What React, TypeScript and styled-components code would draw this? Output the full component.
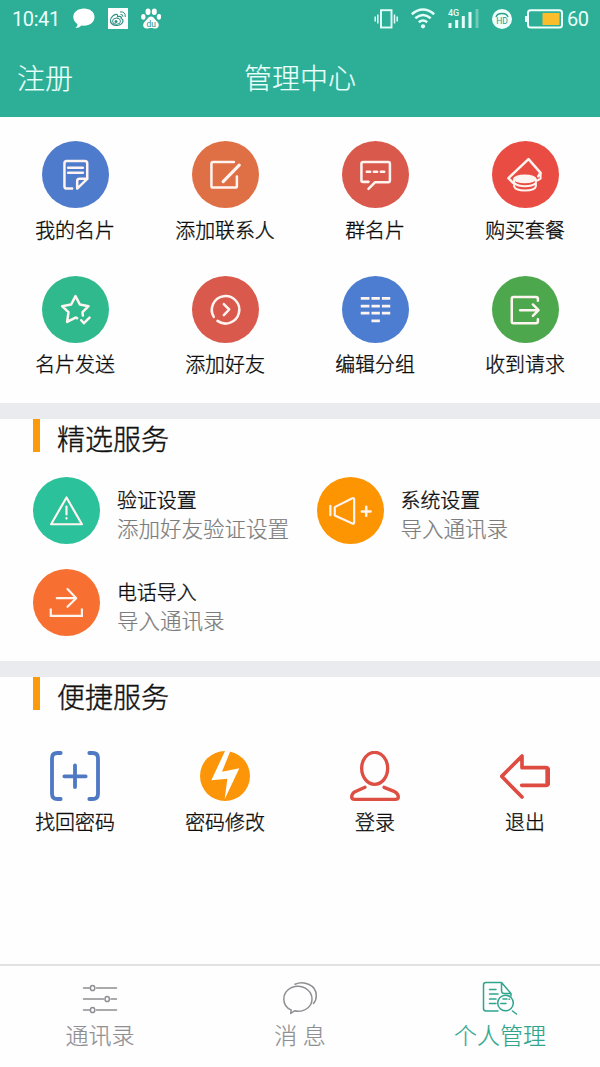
import React from "react";
import styled, { createGlobalStyle } from "styled-components";

const Global = createGlobalStyle`
  *, *::before, *::after { box-sizing: border-box; }
  html, body { margin: 0; padding: 0; background: #fefefe; }
  body {
    font-family: Roboto, "Noto Sans CJK SC", sans-serif;
    color: #111;
    overflow: hidden;
  }
`;

const Screen = styled.div`
  width: 600px;
  height: 1067px;
  display: flex;
  flex-direction: column;
  background: #fefefe;
`;

const Header = styled.header`
  height: 117px;
  flex: none;
  background: #2dae96;
  color: #e9fffb;
`;

const StatusBar = styled.div`
  height: 37px;
  padding: 0 11px 0 12px;
  display: flex;
  align-items: center;
  justify-content: space-between;
`;

const StatusGroup = styled.div`
  display: flex;
  align-items: center;
  gap: 13px;
`;

const StatusText = styled.span<{ $w: number }>`
  width: ${(p) => p.$w}px;
  font-size: 20px;
  line-height: 24px;
  letter-spacing: -0.4px;
  white-space: nowrap;
`;

const BatteryGroup = styled.div`
  display: flex;
  align-items: center;
  gap: 4px;
`;

const NavBar = styled.div`
  height: 80px;
  padding: 6px 17px 0;
  display: grid;
  grid-template-columns: 1fr auto 1fr;
  align-items: center;
  font-size: 28px;
  font-weight: 300;
  line-height: 40px;
  -webkit-text-stroke: 0.2px currentColor;
`;

const ShortcutGrid = styled.section`
  height: 286px;
  flex: none;
  padding-top: 24px;
  display: grid;
  grid-template-columns: repeat(4, 150px);
  grid-auto-rows: 134.5px;
`;

const Shortcut = styled.div<{ $gap: number }>`
  display: flex;
  flex-direction: column;
  align-items: center;
  gap: ${(p) => p.$gap}px;
`;

const Label = styled.span`
  font-size: 19.9px;
  line-height: 28px;
  font-weight: 300;
  -webkit-text-stroke: 0.35px currentColor;
  color: #0c0c0c;
  white-space: nowrap;
`;

const Disc = styled.span<{ $color: string }>`
  width: 67px;
  height: 67px;
  flex: none;
  border-radius: 50%;
  background: ${(p) => p.$color};
  display: flex;

  svg {
    width: 67px;
    height: 67px;
    fill: none;
    stroke: #fff4f0;
    stroke-width: 7.5;
    stroke-linecap: round;
    stroke-linejoin: round;
  }
`;

const Divider = styled.div`
  height: 16px;
  flex: none;
  background: #eaebef;
`;

const Section = styled.section<{ $h: number }>`
  height: ${(p) => p.$h}px;
  flex: none;
`;

const SectionHead = styled.div`
  height: 42px;
  padding-left: 33px;
  display: flex;
  align-items: flex-start;
  gap: 17px;
`;

const Marker = styled.span`
  width: 7px;
  height: 33px;
  background: #fb9b0c;
`;

const SectionTitle = styled.h2`
  margin: 0;
  font-size: 28px;
  line-height: 44px;
  font-weight: 300;
  -webkit-text-stroke: 0.4px currentColor;
`;

const FeatureGrid = styled.div`
  padding: 16px 0 0 33px;
  display: grid;
  grid-template-columns: 283.5px 1fr;
  grid-auto-rows: 92px;
`;

const Feature = styled.div`
  height: 67px;
  display: flex;
  align-items: center;
  gap: 17px;
`;

const FeatureText = styled.div`
  display: flex;
  flex-direction: column;
  padding-top: 10px;
  white-space: nowrap;
`;

const FeatureNote = styled.span`
  font-size: 21.5px;
  line-height: 28px;
  font-weight: 300;
  -webkit-text-stroke: 0.2px currentColor;
  color: #7c7c7c;
`;

const QuickGrid = styled.div`
  padding-top: 32px;
  display: grid;
  grid-template-columns: repeat(4, 150px);
`;

const QuickIcon = styled.svg`
  width: 50px;
  height: 50px;
  fill: none;
  stroke-linecap: round;
  stroke-linejoin: round;
`;

const TabBar = styled.nav`
  height: 103px;
  margin-top: auto;
  flex: none;
  border-top: 2px solid #e2e2e2;
  display: grid;
  grid-template-columns: repeat(3, 200px);
`;

const Tab = styled.div<{ $active?: boolean }>`
  padding-top: 15px;
  display: flex;
  flex-direction: column;
  align-items: center;
  gap: 6px;
  font-size: 23px;
  line-height: 32px;
  font-weight: 300;
  -webkit-text-stroke: 0.2px currentColor;
  white-space: pre;
  color: ${(p) => (p.$active ? "#2fa58e" : "#8f8f93")};

  svg {
    width: 40px;
    height: 34px;
    fill: none;
    stroke: currentColor;
    stroke-width: 1.5;
    stroke-linecap: round;
    stroke-linejoin: round;
  }
`;

/* Disc glyphs share one coordinate system, centred on the disc. */
const Glyph = ({ children }: { children: React.ReactNode }) => (
  <svg viewBox="-100 -100 200 200">{children}</svg>
);

const shortcuts = [
  {
    label: "我的名片",
    color: "#4f7bcd",
    glyph: (
      <>
        <path d="M-10 42H-26Q-33 42-33 35V-33Q-33-40-26-40H28Q35-40 35-33V12" />
        <path d="M-22-20H22M-22-5H22" />
        <path d="M35 13H12Q5 13 5 20V42L35 13Z" />
      </>
    ),
  },
  {
    label: "添加联系人",
    color: "#df6f45",
    glyph: (
      <>
        <path d="M25-37H-37Q-42-37-42-32V34Q-42 39-37 39H29Q34 39 34 34V6" />
        <path d="M-7 21L41-28" strokeWidth="9.500" />
      </>
    ),
  },
  {
    label: "群名片",
    color: "#d9594c",
    glyph: (
      <>
        <path d="M-21 43L-1 23H38Q43 23 43 18V-32Q43-37 38-37H-37Q-42-37-42-32V18Q-42 22-37 22H-21" />
        <path d="M-26-8H-16M-5-8H5M16-8H26" />
      </>
    ),
  },
  {
    label: "购买套餐",
    color: "#e84c42",
    glyph: (
      <>
        <path d="M-37 25L-51 11L9-46L45-5L38 5" />
        <ellipse cx="-2" cy="13" rx="35" ry="13" fill="#fff4f0" stroke="none" />
        <path d="M-34 15V35C-30 52 27 52 31 35V15M-32 26C-20 38 17 38 30 26M45-4V12L35 18" strokeWidth="6" />
      </>
    ),
  },
  {
    label: "名片发送",
    color: "#30b98c",
    glyph: (
      <>
        <path d="M5 26L0 24L-25 37L-21 8L-40-10L-13-15L0-40L13-15L39-10L21 8L22 18" />
        <path d="M17 32L25 41L42 24" />
      </>
    ),
  },
  {
    label: "添加好友",
    color: "#d9594c",
    glyph: (
      <>
        <path d="M-24 34A41 41 0 1 0-35 22" />
        <path d="M-5-16L11 0L-5 17" />
      </>
    ),
  },
  {
    label: "编辑分组",
    color: "#4d7dd1",
    glyph: (
      <path
        strokeLinecap="butt"
        strokeWidth="8.500"
        d="M-44-33H-18M-12-33H13M19-33H44M-44-10H-18M-12-10H13M19-10H44M-44 11H-18M-12 11H13M19 11H44M-12 34H13"
      />
    ),
  },
  {
    label: "收到请求",
    color: "#4ca74d",
    glyph: (
      <>
        <path d="M37-26V-31Q37-37 31-37H-36Q-41-37-41-32V35Q-41 41-36 41H31Q37 41 37 35V29" />
        <path d="M-16 2H38M22-15L39 2L22 19" />
      </>
    ),
  },
];

const features = [
  {
    title: "验证设置",
    note: "添加好友验证设置",
    color: "#2bc19a",
    glyph: (
      <>
        <path d="M0-39L46 41H-46Z" strokeWidth="6.500" />
        <path d="M0-12V12M0 23V24" strokeWidth="6.500" />
      </>
    ),
  },
  {
    title: "系统设置",
    note: "导入通讯录",
    color: "#fd9502",
    glyph: (
      <>
        <path d="M-60-14V14M-47-10L4-36Q11-40 11-32V34Q11 42 4 38L-47 15Z" strokeWidth="6.500" />
        <path d="M34 3H60M47-11V16" strokeWidth="7.500" />
      </>
    ),
  },
  {
    title: "电话导入",
    note: "导入通讯录",
    color: "#f76f31",
    glyph: (
      <>
        <path d="M-47 18V40H46V18" strokeWidth="6.500" strokeLinecap="butt" strokeLinejoin="miter" />
        <path d="M-29-13H27M3-40L29-13L3 13" strokeWidth="6.500" />
      </>
    ),
  },
];

const quick = [
  {
    label: "找回密码",
    icon: (
      <g stroke="#5079c4">
        <path d="M32 6H22Q6 6 6 22V128Q6 144 22 144H32M118 6H128Q144 6 144 22V128Q144 144 128 144H118" strokeWidth="11.500" />
        <path d="M43 76H107M75 43V108" strokeWidth="11.500" />
      </g>
    ),
  },
  {
    label: "密码修改",
    icon: (
      <>
        <circle cx="75" cy="75" r="75" fill="#fc9507" />
        <path d="M76-2H92L66 62L118 52L74 145L82 83L34 88Z" fill="#fff" />
      </>
    ),
  },
  {
    label: "登录",
    icon: (
      <g stroke="#de4f43" strokeWidth="10">
        <ellipse cx="74" cy="52" rx="39" ry="48" />
        <path d="M45 109L15 122Q5 128 5 138Q5 145 14 145H136Q145 145 145 138Q145 128 134 122L102 109" />
      </g>
    ),
  },
  {
    label: "退出",
    icon: (
      <g stroke="#de4b41">
        <path d="M66 138L5 76L66 15V50H137Q145 50 145 58V95Q145 103 137 103H65" strokeWidth="11" />
        <path d="M143 57V96" strokeWidth="14" />
      </g>
    ),
  },
];

const App = () => (
  <>
    <Global />
    <Screen>
      <Header>
        <StatusBar>
          <StatusGroup>
            <StatusText $w={48}>10:41</StatusText>
            <svg width="22" height="21" viewBox="0 0 22 21" fill="#fff">
              <path d="M11 .5C17 .5 21.500 4 21.500 9S17 17.700 11 17.700L8.500 17.500Q6 20 2.500 20Q4.800 18 4.500 16C2 14.500.3 12 .3 9C.3 4 5 .5 11 .5Z" />
            </svg>
            <svg width="20" height="21" viewBox="0 0 20 21" fill="none" stroke="#2b8f83">
              <rect width="20" height="21" fill="#fff" stroke="none" />
              <path d="M2.500 13C2 9.500 6.500 5.500 9 6.500Q10 7 9.500 8.800C12 8 14 8.500 13.200 10.500C16 11.500 15.500 14.800 12.500 16.500C8.500 18.500 3 17.500 2.500 13Z" strokeWidth="1.200" />
              <ellipse cx="8.500" cy="13.200" rx="4" ry="3.100" strokeWidth="1" />
              <circle cx="8" cy="13.500" r="1.500" fill="#2b8f83" stroke="none" />
              <path d="M12 4Q17.500 3 17.300 9M12.500 6.500Q15.200 6.200 15 8.800" strokeWidth="1" />
            </svg>
            <svg width="20" height="21" viewBox="0 0 20 21" fill="#fff">
              <ellipse cx="7" cy="3.800" rx="2.500" ry="3.300" />
              <ellipse cx="13.300" cy="3.800" rx="2.500" ry="3.300" />
              <ellipse cx="2.300" cy="8.800" rx="2.200" ry="2.900" />
              <ellipse cx="18" cy="8.800" rx="2.200" ry="2.900" />
              <path d="M10 8.500C13 8.500 14 12 16 13.500C19 16 18 20.500 14.500 20.500C12 20.500 12 20 10 20S8 20.500 5.500 20.500C2 20.500 1 16 4 13.500C6 12 7 8.500 10 8.500Z" />
              <text x="10.200" y="18.500" fontSize="8.500" textAnchor="middle" fill="#2b8f83" fontFamily="Roboto">du</text>
            </svg>
          </StatusGroup>
          <StatusGroup>
            <svg width="24" height="20" viewBox="0 0 24 20" fill="none" stroke="#e4fffa">
              <rect x="7" y="1.200" width="10.500" height="17.300" strokeWidth="1.900" />
              <path d="M3.800 5.500V14.500M1.200 7.500V12.500M20.500 5.500V14.500M23.200 7.500V12.500" strokeWidth="1.500" />
            </svg>
            <svg width="24" height="21" viewBox="0 0 24 21" fill="none" stroke="#e4fffa" strokeWidth="2.500">
              <path d="M.8 6.200Q12-3.200 23.200 6.200M4.300 10.300Q12 3.800 19.700 10.300M7.800 14.200Q12 10.800 16.200 14.200" />
              <circle cx="12" cy="18.300" r="2.100" fill="#e4fffa" stroke="none" />
            </svg>
            <svg width="31" height="21" viewBox="0 0 31 21" stroke="#e4fffa" strokeWidth="3">
              <text x="0" y="7.500" fontSize="9" fontWeight="500" fill="#e4fffa" stroke="none" fontFamily="Roboto">4G</text>
              <path d="M2 15V20M8.700 12V20M15.300 8V20M22 4V20" />
              <path d="M29 1V20" opacity=".35" />
            </svg>
            <svg width="20" height="20" viewBox="0 0 20 20">
              <circle cx="10" cy="10" r="10" fill="#effffc" />
              <path d="M4 8.200Q5 4.500 10 4.500T16 8.200" fill="none" stroke="#2b9d8a" strokeWidth="1.300" />
              <text x="10" y="15.200" fontSize="8.500" textAnchor="middle" fill="#2b9d8a" fontFamily="Roboto">HD</text>
            </svg>
            <BatteryGroup>
              <svg width="38" height="20" viewBox="0 0 38 20">
                <path d="M0 7H3V13H0Z" fill="#effffc" />
                <rect x="3" y="1.300" width="34" height="17.300" rx="2.500" fill="none" stroke="#effffc" strokeWidth="2" />
                <rect x="17.500" y="4" width="17" height="12" fill="#fbbd2b" />
              </svg>
              <StatusText $w={22}>60</StatusText>
            </BatteryGroup>
          </StatusGroup>
        </StatusBar>
        <NavBar>
          <span>注册</span>
          <span>管理中心</span>
        </NavBar>
      </Header>

      <ShortcutGrid>
        {shortcuts.map((s) => (
          <Shortcut key={s.label} $gap={9.5}>
            <Disc $color={s.color}>
              <Glyph>{s.glyph}</Glyph>
            </Disc>
            <Label>{s.label}</Label>
          </Shortcut>
        ))}
      </ShortcutGrid>

      <Divider />

      <Section $h={242}>
        <SectionHead>
          <Marker />
          <SectionTitle>精选服务</SectionTitle>
        </SectionHead>
        <FeatureGrid>
          {features.map((f) => (
            <Feature key={f.title}>
              <Disc $color={f.color}>
                <Glyph>{f.glyph}</Glyph>
              </Disc>
              <FeatureText>
                <Label>{f.title}</Label>
                <FeatureNote>{f.note}</FeatureNote>
              </FeatureText>
            </Feature>
          ))}
        </FeatureGrid>
      </Section>

      <Divider />

      <Section $h={240}>
        <SectionHead>
          <Marker />
          <SectionTitle>便捷服务</SectionTitle>
        </SectionHead>
        <QuickGrid>
          {quick.map((q) => (
            <Shortcut key={q.label} $gap={9}>
              <QuickIcon viewBox="0 0 150 150">{q.icon}</QuickIcon>
              <Label>{q.label}</Label>
            </Shortcut>
          ))}
        </QuickGrid>
      </Section>

      <TabBar>
        <Tab>
          <svg viewBox="-20 0 40 34">
            <path d="M-16.500 7H-10.500M-3.500 7H16.500M-16.500 18H3.500M11 18H16.500M-16.500 29H-10.500M-3.500 29H16.500" />
            <ellipse cx="-7.400" cy="7" rx="2.200" ry="2.600" />
            <ellipse cx="7.200" cy="18" rx="2.200" ry="2.600" />
            <ellipse cx="-7.400" cy="29" rx="2.200" ry="2.600" />
          </svg>
          通讯录
        </Tab>
        <Tab>
          <svg viewBox="-20 0 40 34">
            <path d="M-8.800 29C-13.500 27-16.200 23-16.200 18C-16.200 11-10 5.300-2.200 5.300S12 11 12 18S6 30.300-2 30.300Q-4 30.300-5.500 29.800L-9.300 32.500Z" />
            <path d="M-5 3.300C4-.5 16.300 4 16.300 14.500Q16.300 19.500 13.500 22.500" />
          </svg>
          消 息
        </Tab>
        <Tab $active>
          <svg viewBox="-20 0 40 34">
            <path d="M-2 30H-14Q-16.500 30-16.500 27.500V4Q-16.500 1.500-14 1.500H1.500L11 12.500V15M1.500 1.500V9.500Q1.500 12.500 4 12.500H11" />
            <path d="M-10.500 8.500H-4M-10.500 13H-2M-10.500 18H-4M-10.500 22.500H-4" />
            <circle cx="5.500" cy="22" r="7.800" />
            <path d="M.8 22.500H6M3 18H7M9 18.200H9.500M12.500 30L16.500 33" />
          </svg>
          个人管理
        </Tab>
      </TabBar>
    </Screen>
  </>
);

export default App;
